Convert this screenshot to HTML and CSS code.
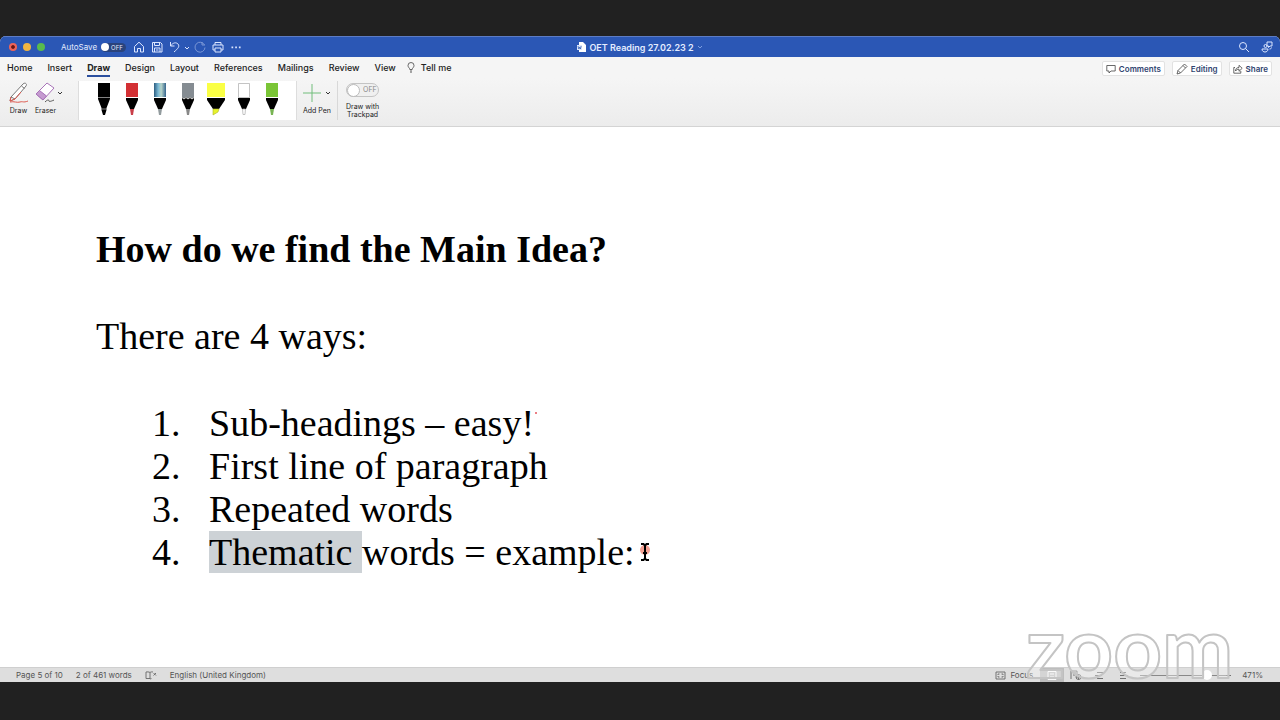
FILE: index.html
```html
<!DOCTYPE html>
<html lang="en">
<head>
    <meta charset="UTF-8">
    <meta name="viewport" content="width=device-width, initial-scale=1.0">
    <title>OET Reading 27.02.23 2</title>
    <link rel="stylesheet" href="styles.css">
</head>
<body>
    <div class="window">
        <header class="titlebar">
            <div class="title-left">
                <div class="lights">
                    <button class="light close" aria-label="Close"></button>
                    <button class="light minimise" aria-label="Minimise"></button>
                    <button class="light maximise" aria-label="Zoom"></button>
                </div>
                <label class="autosave">AutoSave
                    <span class="switch switch-dark"><input type="checkbox"><span>OFF</span></span>
                </label>
                <div class="quick">
                    <button aria-label="Home"><svg width="12" height="12" viewBox="0 0 12 12"><path d="M1.5 5.5 6 1.2l4.500 4.300V11H7.500V7.500h-3V11h-3z"/></svg></button>
                    <button aria-label="Save"><svg width="12" height="12" viewBox="0 0 12 12"><path d="M1.500 1.500h8l1.500 1.500v8h-9.500zM3.500 1.500v3h5v-3M3.500 11V7h5.500v4M5 9h2.500"/></svg></button>
                    <button aria-label="Undo"><svg width="12" height="12" viewBox="0 0 12 12"><path d="M1.500 1v4h4M1.500 5C4 1.500 7 1 9 3c2 2.500 0 4.500-4 8"/></svg></button>
                    <button class="mini" aria-label="Undo list"><svg width="6" height="12" viewBox="0 0 6 12"><path d="M1 5l2 2 2-2"/></svg></button>
                    <button class="dim" aria-label="Redo"><svg width="12" height="12" viewBox="0 0 12 12"><path d="M8 1v3h3M10.500 4A5 5 0 1 0 11 6.500"/></svg></button>
                    <button class="print" aria-label="Print"><svg width="12" height="12" viewBox="0 0 12 12"><path d="M3 4V1.500h6V4M3 9H1V4h10v5H9M3 7h6v4H3z"/></svg></button>
                    <button aria-label="More"><svg width="12" height="12" viewBox="0 0 12 12"><path class="solid" d="M1.500 5.500h1.700v1.700H1.500zM5.200 5.500h1.700v1.700H5.200zM8.900 5.500h1.700v1.700H8.900z"/></svg></button>
                </div>
            </div>
            <div class="doc-title">
                <svg width="9" height="10" viewBox="0 0 9 10"><path d="M2 0h4l3 3v7H2z" fill="#fff"/><path d="M0 3h5v5H0z" fill="#dce6fa"/><path d="M1 4l.8 3 .8-2 .8 2 .8-3" fill="none" stroke="#2b57b0" stroke-width=".7"/></svg>
                <span>OET Reading 27.02.23 2</span>
                <svg width="6" height="6" viewBox="0 0 6 6"><path d="M1 2l2 2 2-2" fill="none" stroke="#7f9fe0"/></svg>
            </div>
            <div class="title-right">
                <button aria-label="Search"><svg width="12" height="12" viewBox="0 0 12 12"><circle cx="5" cy="5" r="3.500"/><path d="M7.500 7.500L11 11"/></svg></button>
                <button aria-label="Collaborate"><svg width="12" height="12" viewBox="0 0 12 12"><circle cx="4.500" cy="5" r="1.500"/><path d="M1 8h6c0 4-6 4-6 0zM6 1h5v4H9L7.500 6.500V5H6zM8.500 8c1 0 2-.5 2-1.500"/></svg></button>
            </div>
        </header>

        <nav class="tabs">
            <a href="#">Home</a>
            <a href="#">Insert</a>
            <a href="#" class="active">Draw</a>
            <a href="#">Design</a>
            <a href="#">Layout</a>
            <a href="#">References</a>
            <a href="#">Mailings</a>
            <a href="#">Review</a>
            <a href="#">View</a>
            <a href="#" class="tell"><svg width="8" height="11" viewBox="0 0 8 11"><path d="M2.800 7.500C2.800 6 1 5.500 1 3.500a3 3 0 0 1 6 0c0 2-1.800 2.500-1.800 4zM3 9h2M3.300 10.300h1.400"/></svg>Tell me</a>
            <div class="share-group">
                <button><svg width="10" height="10" viewBox="0 0 10 10"><path d="M.8 1.500h8.400v5.500H5L3 9V7H.8z"/></svg>Comments</button>
                <button><svg width="12" height="12" viewBox="0 0 12 12"><path d="M1 11l1-3.500L8.500 1 11 3.500 4.500 10zM7 2.500L9.500 5M2 7.500L4.500 10"/></svg>Editing</button>
                <button><svg width="10" height="10" viewBox="0 0 10 10"><path d="M2 3.500H.8v5.700h7V7M2.500 7C2.500 4.500 4 3.500 6 3.500V1.300l3.200 3L6 7.300V5.200C4.500 5.200 3.500 5.500 2.500 7z"/></svg>Share</button>
            </div>
        </nav>

        <section class="tools">
            <button class="tool draw">
                <svg width="22" height="22" viewBox="0 0 22 22"><path d="M3 15L15 2c2-2 4.500 0 3 2L7 17l-5 2zM3 15l4 2M13.500 4l3 2.500" fill="#fff" stroke="#777"/><path d="M2 20c4-1 7 1 10 0s3 1 8-1" fill="none" stroke="#dc5a50"/><path d="M3 15l-1 4 5-2 6-7" fill="none" stroke="#dc5a50"/></svg>
                Draw
            </button>
            <button class="tool eraser">
                <svg width="22" height="22" viewBox="0 0 22 22"><path d="M1 12L12 1l7 5L8 18z" fill="#fff" stroke="#a873b8"/><path d="M1 12l3.500-3.500 7 5.500L8 18z" fill="#c59bd0" stroke="#a873b8"/><path d="M10 20c3-3 4-2 4-1s3 0 5-1" fill="none" stroke="#555"/></svg>
                Eraser
            </button>
            <button class="drop" aria-label="Eraser sizes"><svg width="6" height="6" viewBox="0 0 6 6"><path d="M1 2l2 2 2-2"/></svg></button>
            <div class="pens">
                <button aria-label="Black pen"><svg width="20" height="34" viewBox="0 0 20 34"><path d="M4 0h12v16l-3.500 9v2L11 32H9l-1.500-5v-2L4 16z"/><path d="M4 14.500h12M7 26h6" stroke="#bbb" stroke-width=".7"/></svg></button>
                <button aria-label="Red pen"><svg width="20" height="34" viewBox="0 0 20 34"><path d="M4 0h12v14H4z" fill="#d33034"/><path d="M4 15h12v2l-4 9H8l-4-9z"/><path d="M8 26h4l-1 6H9z" fill="#c93e48"/></svg></button>
                <button aria-label="Galaxy pen"><svg width="20" height="34" viewBox="0 0 20 34"><defs><linearGradient id="galaxy"><stop stop-color="#2c5d80"/><stop offset=".35" stop-color="#79b8d4"/><stop offset=".6" stop-color="#b7d4c9"/><stop offset="1" stop-color="#35658e"/></linearGradient></defs><path d="M4 0h12v14H4z" fill="url(#galaxy)"/><path d="M4 15h12v2l-4 9H8l-4-9z"/><path d="M8 26h4l-1 6H9z" fill="#929b9e"/></svg></button>
                <button aria-label="Pencil"><svg width="20" height="34" viewBox="0 0 20 34"><path d="M4 14h12v3l-4 9H8l-4-9z"/><path d="M4 0h12v14l-2 1.500-2-1.500-2 1.500L8 14l-2 1.500L4 14z" fill="#858c92"/><path d="M4 14.500L6 16l2-1.500L10 16l2-1.500 2 1.500 2-1.500" fill="none" stroke="#ddd"/><path d="M8 26h4l-1 6H9z" fill="#888"/></svg></button>
                <button aria-label="Yellow highlighter"><svg width="20" height="34" viewBox="0 0 20 34"><path d="M1 0h18v14H1z" fill="#faff45"/><path d="M1 15h18v2l-6 9H7l-6-9z"/><path d="M7 26h6l-1 3-5 3z" fill="#e6f22c" stroke="#afb72b" stroke-width=".6"/></svg></button>
                <button aria-label="White pen"><svg width="20" height="34" viewBox="0 0 20 34"><path d="M4.500.5h11v14h-11z" fill="#fff" stroke="#aaa" stroke-width=".7"/><path d="M4 15h12v2l-4 9H8l-4-9z"/><path d="M8.500 26h3l-.5 5.500H9z" fill="#fff" stroke="#aaa" stroke-width=".7"/></svg></button>
                <button aria-label="Green pen"><svg width="20" height="34" viewBox="0 0 20 34"><path d="M4 0h12v14H4z" fill="#7ac536"/><path d="M4 15h12v2l-4 9H8l-4-9z"/><path d="M8 26h4l-1 6H9z" fill="#78b453"/></svg></button>
            </div>
            <button class="tool add">
                <svg width="30" height="22" viewBox="0 0 30 22"><path d="M10 2v18M1 11h18" stroke="#70bd7b" fill="none"/><path d="M24 10l2 2 2-2" stroke="#333" fill="none"/></svg>
                Add Pen
            </button>
            <label class="trackpad">
                <span class="switch switch-light"><input type="checkbox"><span>OFF</span></span>
                <span>Draw with<br>Trackpad</span>
            </label>
        </section>

        <main class="document">
            <h1>How do we find the Main Idea?</h1>
            <p>There are 4 ways:</p>
            <ol>
                <li><span class="num">1.</span>Sub-headings – easy!<span class="ink-dot"></span></li>
                <li><span class="num">2.</span>First line of paragraph</li>
                <li><span class="num">3.</span>Repeated words</li>
                <li><span class="num">4.</span><span class="selected">Thematic </span>words = example:<svg class="caret" width="10" height="20" viewBox="0 0 10 20"><circle cx="5" cy="8" r="5" fill="#f4a193"/><path d="M1 2h2.500L5 3.500 6.500 2H9M5 3v14M1 18h2.500L5 16.500 6.500 18H9M3 11h4" fill="none" stroke="#000" stroke-width="2"/></svg></li>
            </ol>
        </main>

        <footer class="statusbar">
            <span class="page">Page 5 of 10</span>
            <span>2 of 461 words</span>
            <button aria-label="Proofing"><svg width="12" height="9" viewBox="0 0 12 9"><path d="M5 1.500C4 .8 2 .8 1 1v6.500h4c.5.500 1 .5 1.500 0M5 1.500V8M5 1.500C6 .8 7 .8 8 1M8.500 2l2.500 2.500M11 2L8.500 4.500"/></svg></button>
            <span>English (United Kingdom)</span>
            <div class="views">
                <button class="focus"><svg width="11" height="9" viewBox="0 0 11 9"><path d="M1 1h9v7H1zM3 4V3h1.500M6.500 3H8v1M8 5v1H6.500M4.500 6H3V5"/></svg>Focus</button>
                <button class="view current" aria-label="Print layout"><svg width="10" height="9" viewBox="0 0 10 9"><path d="M1 .5h8v8H1zM3 3h4M3 6h4" stroke="#fff"/></svg></button>
                <button class="view" aria-label="Web layout"><svg width="12" height="10" viewBox="0 0 12 10"><path d="M1 9V1h6v3M3 3h3M3 5h2"/><circle cx="8.500" cy="7" r="2.500"/><path d="M6 7h5M8.500 4.500v5"/></svg></button>
                <button class="view" aria-label="Outline"><svg width="10" height="9" viewBox="0 0 10 9"><path d="M2 1.500h7M0 4.500h7M2 7.500h6"/></svg></button>
                <button class="view" aria-label="Draft"><svg width="10" height="9" viewBox="0 0 10 9"><path d="M1 1.500h6M1 4.500h8M1 7.500h6"/></svg></button>
                <input class="zoom-range" type="range" min="10" max="500" value="410" aria-label="Zoom level">
                <svg class="plus" width="5" height="5" viewBox="0 0 5 5"><path d="M0 2.500h5M2.500 0v5"/></svg>
                <span>471%</span>
            </div>
        </footer>
    </div>

    <svg class="watermark" width="204" height="64" viewBox="0 0 204 64"><text x="0" y="54">zoom</text></svg>
</body>
</html>
```

FILE: styles.css
```css
* {
    box-sizing: border-box;
}
body {
    margin: 0;
    height: 100vh;
    padding: 36px 0 38px;
    background-color: #212121;
    color: #222;
    font-family: Inter, "Liberation Sans", sans-serif;
    font-size: 9px;
    position: relative;
    overflow: hidden;
}
button {
    border: none;
    background: none;
    padding: 0;
    margin: 0;
    font: inherit;
    color: inherit;
    display: flex;
    align-items: center;
    justify-content: center;
}
a {
    color: inherit;
    text-decoration: none;
}
svg {
    display: block;
    flex: none;
}
.window {
    height: 100%;
    display: flex;
    flex-direction: column;
    background-color: #fff;
    border-radius: 6px 6px 0 0;
    overflow: hidden;
}

/* title bar */
.titlebar {
    display: grid;
    grid-template-columns: 1fr auto 1fr;
    align-items: center;
    height: 21px;
    flex: none;
    background-color: #2b57b5;
    border-top: 1px solid #5d7cc4;
    color: #e4ecff;
}
.title-left {
    display: flex;
    align-items: center;
    padding-left: 9px;
}
.lights {
    display: flex;
    gap: 6px;
    width: 52px;
}
.light {
    width: 8px;
    height: 8px;
    border-radius: 50%;
}
.close {
    background: radial-gradient(#6a1512 25%, #ee6359 40%);
}
.minimise {
    background-color: #f2b541;
}
.maximise {
    background-color: #58bb4c;
}
.autosave {
    display: flex;
    align-items: center;
    gap: 4px;
    font-size: 8px;
}
.switch {
    display: flex;
    align-items: center;
    border-radius: 8px;
}
.switch input {
    appearance: none;
    margin: 0;
    border-radius: 50%;
    background-color: #fff;
}
.switch-dark {
    width: 25px;
    height: 9px;
    gap: 2px;
    background-color: #2a437c;
    font-size: 6px;
}
.switch-dark input {
    width: 8px;
    height: 8px;
}
.switch-light {
    width: 33px;
    height: 14px;
    gap: 3px;
    border: 1px solid #c4c4c4;
    background-color: #f0f0f0;
    color: #888;
    font-size: 7px;
}
.switch-light input {
    width: 13px;
    height: 13px;
    border: 1px solid #bbb;
}
.quick {
    display: flex;
    align-items: center;
    gap: 6px;
    padding-left: 7px;
}
.quick svg, .title-right svg {
    fill: none;
    stroke: #dce6ff;
}
.quick .solid {
    fill: #dce6ff;
    stroke: none;
}
.quick .mini {
    margin: 0 -2px -1px -3px;
}
.quick .dim {
    opacity: 0.45;
}
.doc-title {
    display: flex;
    align-items: center;
    gap: 3px;
    font-weight: 600;
}
.title-right {
    display: flex;
    justify-content: flex-end;
    gap: 11px;
    padding-right: 7px;
}

/* ribbon */
.tabs {
    display: flex;
    align-items: center;
    height: 21px;
    flex: none;
    gap: 15px;
    padding: 0 8px 0 7px;
    background-color: #f5f5f5;
    font-weight: 500;
}
.tabs a {
    height: 18px;
    line-height: 17px;
}
.tabs .active {
    font-weight: 700;
    border-bottom: 2px solid #2b4f9e;
}
.tabs .tell {
    display: flex;
    align-items: center;
    gap: 6px;
    margin-left: -4px;
}
.tabs svg {
    fill: none;
    stroke: #444;
    stroke-width: 0.8;
}
.share-group {
    display: flex;
    gap: 7px;
    margin-left: auto;
    padding-top: 2px;
}
.share-group button {
    height: 15px;
    gap: 3px;
    padding: 0 3px;
    border: 1px solid #e2e2e2;
    border-radius: 2px;
    background-color: #fff;
    color: #30446f;
    font-size: 8px;
    font-weight: 600;
}
.tools {
    display: flex;
    align-items: flex-start;
    height: 49px;
    flex: none;
    padding: 3px 7px 0;
    background: linear-gradient(#f5f5f5, #ececec);
    border-bottom: 1px solid #d4d4d4;
    font-size: 7px;
}
.tool {
    flex-direction: column;
    gap: 2px;
    padding-top: 1px;
}
.draw {
    width: 23px;
}
.eraser {
    width: 25px;
    margin-left: 3px;
}
.drop {
    width: 4px;
    height: 24px;
}
.drop path {
    fill: none;
    stroke: #333;
}
.pens {
    display: flex;
    gap: 8px;
    height: 39px;
    margin-left: 16px;
    padding: 2px 14px 0 15px;
    background-color: #fff;
    border-right: 1px solid #ddd;
    border-left: 1px solid #ddd;
}
.pens button {
    height: 34px;
}
.add {
    width: 40px;
}
.trackpad {
    display: flex;
    flex-direction: column;
    align-items: center;
    gap: 6px;
    height: 39px;
    border-left: 1px solid #d8d8d8;
    padding: 2px 0 0 8px;
    line-height: 8px;
    text-align: center;
}

/* document */
.document {
    flex: 1;
    min-height: 0;
    padding: 101px 96px 0;
    color: #000;
    font-family: "Liberation Serif", serif;
    font-size: 38px;
    line-height: 43px;
}
.document h1 {
    margin: 0 0 44px;
    font-size: 38px;
}
.document p {
    margin: 0 0 44px;
}
.document ol {
    margin: 0;
    padding-left: 56px;
    list-style: none;
}
.num {
    display: inline-block;
    width: 57px;
}
.selected {
    background-color: #cdd2d6;
}
.ink-dot {
    display: inline-block;
    width: 2px;
    height: 2px;
    margin-left: 1px;
    border-radius: 50%;
    background-color: #e5545c;
    vertical-align: 22px;
}
.caret {
    display: inline-block;
    margin-left: 5px;
    vertical-align: 3px;
}

/* status bar */
.statusbar {
    display: flex;
    align-items: center;
    height: 15px;
    flex: none;
    gap: 13px;
    padding: 0 17px 0 16px;
    background-color: #dedede;
    border-top: 1px solid #cfcfcf;
    color: #555;
    font-size: 8px;
}
.statusbar svg {
    fill: none;
    stroke: #666;
    stroke-width: 0.9;
}
.views {
    display: flex;
    align-items: center;
    margin-left: auto;
}
.focus {
    gap: 4px;
    margin-right: 7px;
}
.view {
    width: 24px;
    height: 14px;
}
.current {
    background-color: #bdbdbd;
}
.zoom-range {
    appearance: none;
    width: 86px;
    height: 10px;
    margin: 0 0 0 4px;
    background: linear-gradient(#888, #888) center / 100% 1px no-repeat;
}
.zoom-range::-webkit-slider-thumb {
    appearance: none;
    width: 10px;
    height: 10px;
    border-radius: 50%;
    background-color: #fff;
}
.plus {
    margin-right: 11px;
}
.watermark {
    position: absolute;
    right: 50px;
    bottom: 32px;
    overflow: visible;
    pointer-events: none;
}
.watermark text {
    fill: rgba(255, 255, 255, 0.35);
    stroke: #c4c4c4;
    stroke-width: 2px;
    stroke-linejoin: round;
    font-family: Lato, sans-serif;
    font-size: 85px;
    font-weight: 700;
}
```
